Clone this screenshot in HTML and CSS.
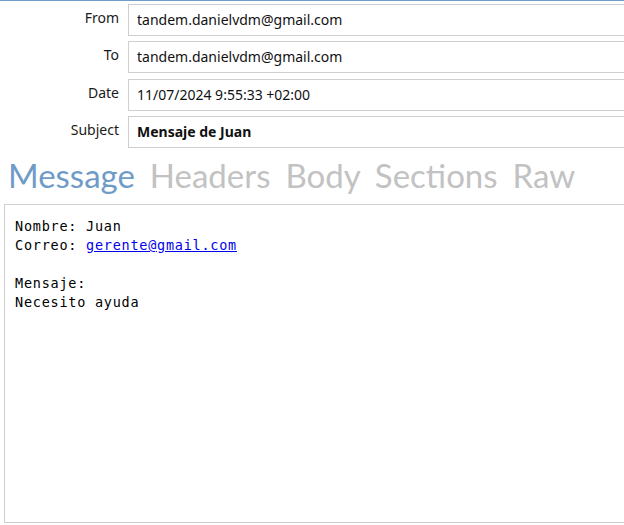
FILE: index.html
```html
<!DOCTYPE html>
<html>
<head>
<meta charset="utf-8">
<link rel="stylesheet" href="styles.css">
</head>
<body>
<div class="topline"></div>
<div class="headers">
  <div class="label">From</div><div class="field">tandem.danielvdm@gmail.com</div>
  <div class="label">To</div><div class="field">tandem.danielvdm@gmail.com</div>
  <div class="label shift">Date</div><div class="field shift">11/07/2024 9:55:33 +02:00</div>
  <div class="label">Subject</div><div class="field bold">Mensaje de Juan</div>
</div>
<div class="tabs">
  <span class="tab active">Message</span>
  <span class="tab">Headers</span>
  <span class="tab">Body</span>
  <span class="tab">Sections</span>
  <span class="tab">Raw</span>
</div>
<div class="body">
<pre class="msg">Nombre: Juan
Correo: <a href="#">gerente@gmail.com</a>

Mensaje:
Necesito ayuda</pre>
</div>
</body>
</html>
```
FILE: styles.css
```css
html, body {
  margin: 0;
  padding: 0;
  background: #fff;
  overflow: hidden;
  width: 624px;
  height: 525px;
}
body {
  font-family: "Noto Sans", "Open Sans", sans-serif;
  color: #000;
}
.topline {
  height: 1px;
  background: #6f9bc8;
}
.headers {
  display: grid;
  grid-template-columns: 128px 1fr;
  row-gap: 5px;
  padding-top: 3px;
}
.shift {
  margin-top: 1px;
}
.label {
  text-align: right;
  padding-right: 9px;
  font-size: 14px;
  line-height: 28px;
  color: #1a1a1a;
}
.field {
  height: 32px;
  box-sizing: border-box;
  border: 1px solid #cfcfcf;
  border-right: none;
  padding-left: 8px;
  font-size: 14px;
  line-height: 30px;
  color: #111;
}
.field.bold {
  font-weight: 700;
}
.tabs {
  padding: 7px 0 0 8px;
  height: 56px;
  box-sizing: border-box;
  font-family: "Lato", "Noto Sans", sans-serif;
  font-size: 33px;
  line-height: 40px;
  word-spacing: 6.5px;
  white-space: nowrap;
}
.tab {
  color: #c2c2c2;
}
.tab.active {
  color: #6f9bc8;
}
.body {
  margin-left: 4px;
  border: 1px solid #cfcfcf;
  border-right: none;
  height: 319px;
  box-sizing: border-box;
  padding: 12px 10px;
}
.msg {
  margin: 0;
  font-family: "DejaVu Sans Mono", "Liberation Mono", monospace;
  font-size: 13.5px;
  letter-spacing: 0.75px;
  line-height: 19px;
  color: #000;
}
.msg a {
  color: #0000ee;
  text-decoration: underline;
}
```
